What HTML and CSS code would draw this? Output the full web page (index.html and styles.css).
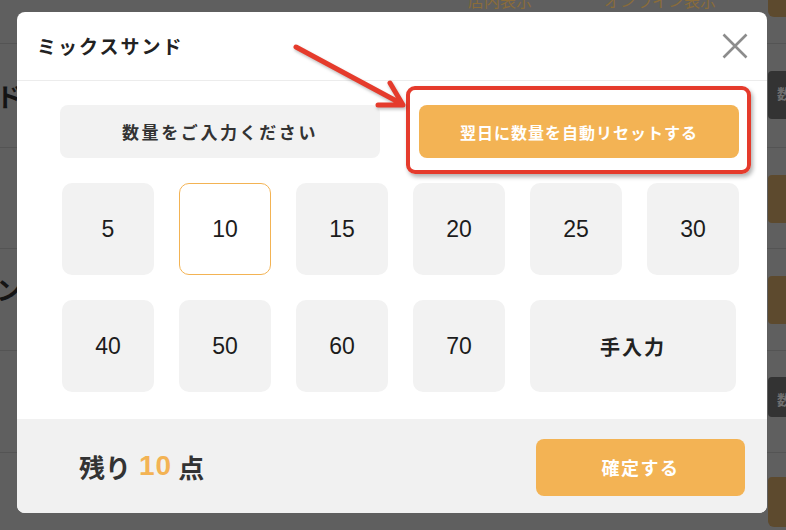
FILE: index.html
```html
<!DOCTYPE html>
<html lang="ja">
<head>
<meta charset="utf-8">
<title>ミックスサンド</title>
<link rel="stylesheet" href="styles.css">
</head>
<body>
<div class="page">
  <div class="row row0">
    <div class="row-left"></div>
    <div class="row-mid tabs"><span class="tab">店内表示</span><span class="tab">オンライン表示</span></div>
    <div class="row-right"><div class="blk brown blk-top"></div></div>
  </div>
  <div class="row row1">
    <div class="row-left"><span class="bg-text">サンド</span></div>
    <div class="row-mid"></div>
    <div class="row-right"><div class="blk dark">数</div></div>
  </div>
  <div class="row row2">
    <div class="row-left"></div>
    <div class="row-mid"></div>
    <div class="row-right"><div class="blk brown"></div></div>
  </div>
  <div class="row row3">
    <div class="row-left"><span class="bg-text up">サン</span></div>
    <div class="row-mid"></div>
    <div class="row-right"><div class="blk brown"></div></div>
  </div>
  <div class="row row4">
    <div class="row-left"></div>
    <div class="row-mid"></div>
    <div class="row-right"><div class="blk dark short">数</div></div>
  </div>
  <div class="row row5">
    <div class="row-left"></div>
    <div class="row-mid"></div>
    <div class="row-right"><div class="blk brown blk-last"></div></div>
  </div>
</div>

<div class="modal">
  <div class="modal-header">
    <h1 class="modal-title">ミックスサンド</h1>
    <button class="close" aria-label="閉じる">
      <svg width="26" height="26" viewBox="0 0 26 26"><path d="M1.5 1.5 L24.5 24.5 M24.5 1.5 L1.5 24.5" stroke="#8c8c8c" stroke-width="2.6" stroke-linecap="butt" fill="none"/></svg>
    </button>
  </div>
  <div class="modal-body">
    <div class="top-row">
      <div class="btn-label">数量をご入力ください</div>
      <button class="btn-reset">翌日に数量を自動リセットする</button>
    </div>
    <div class="qty-grid">
      <button class="qty">5</button>
      <button class="qty selected">10</button>
      <button class="qty">15</button>
      <button class="qty">20</button>
      <button class="qty">25</button>
      <button class="qty">30</button>
      <button class="qty">40</button>
      <button class="qty">50</button>
      <button class="qty">60</button>
      <button class="qty">70</button>
      <button class="qty manual">手入力</button>
    </div>
  </div>
  <div class="modal-footer">
    <div class="remain">残り<span class="num">10</span>点</div>
    <button class="btn-confirm">確定する</button>
  </div>
</div>

<div class="highlight"></div>
<svg class="arrow" width="786" height="530" viewBox="0 0 786 530">
  <path d="M296 47 L402 104 M378 105 L403 105 L390 83" stroke="#e53b2c" stroke-width="5" stroke-linecap="round" stroke-linejoin="round" fill="none"/>
</svg>
</body>
</html>
```

FILE: styles.css
```css
* { box-sizing: border-box; }
html, body { margin: 0; padding: 0; }
body {
  width: 786px;
  height: 530px;
  overflow: hidden;
  position: relative;
  background: #5f5f5f;
  font-family: "Liberation Sans", "Noto Sans CJK JP", sans-serif;
}

/* background page (dimmed) */
.page {
  display: flex;
  flex-direction: column;
  width: 786px;
  height: 530px;
}
.row {
  display: flex;
  border-bottom: 1px solid #545454;
  flex: none;
}
.row0 { height: 44px; }
.row1 { height: 104px; }
.row2 { height: 101px; }
.row3 { height: 102px; }
.row4 { height: 102px; }
.row5 { height: 90px; border-bottom: none; }
.row-left {
  width: 22px;
  display: flex;
  justify-content: flex-end;
  align-items: center;
  overflow: visible;
  white-space: nowrap;
}
.row-mid { flex: 1; }
.row-right { width: 18px; position: relative; }
.bg-text {
  font-family: "Noto Sans CJK JP", sans-serif;
  font-weight: 700;
  font-size: 26px;
  color: #141414;
}
.bg-text.up { margin-top: -22px; }
.blk {
  margin-top: 27px;
  height: 48px;
  width: 30px;
  border-radius: 4px 0 0 4px;
  color: #6f6f6f;
  font-family: "Noto Sans CJK JP", sans-serif;
  font-weight: 700;
  font-size: 14px;
  padding: 12px 0 0 9px;
}
.brown { background: #5d4a2e; }
.dark { background: #333333; }
.blk.short { height: 40px; margin-top: 26px; }
.blk-top { margin-top: 0; height: 17px; border-radius: 0 0 0 6px; }
.blk-last { margin-top: 24px; height: 50px; border-radius: 4px 0 0 6px; }
.tabs {
  display: flex;
  overflow: hidden;
}
.tab {
  font-family: "Noto Sans CJK JP", sans-serif;
  font-size: 16px;
  line-height: 16px;
  color: #8a6c3a;
  margin-top: -8px;
  white-space: nowrap;
}
.tab:first-child { margin-left: 446px; }
.tab + .tab { margin-left: 72px; }

/* modal */
.modal {
  position: absolute;
  left: 17px;
  top: 12px;
  width: 750px;
  height: 501px;
  background: #fff;
  border-radius: 8px;
  display: flex;
  flex-direction: column;
  overflow: hidden;
}
.modal-header {
  height: 69px;
  flex: none;
  border-bottom: 1px solid #ececec;
  display: flex;
  align-items: center;
  justify-content: space-between;
  padding: 0 19px 0 20px;
}
.modal-title {
  margin: 0;
  font-family: "Noto Sans CJK JP", sans-serif;
  font-size: 19px;
  font-weight: 700;
  letter-spacing: 2px;
  color: #222;
  margin-top: -1px;
}
.close {
  border: none;
  background: none;
  padding: 0;
  width: 26px;
  height: 26px;
  display: block;
}
.close svg { display: block; }

.modal-body {
  flex: none;
  height: 338px;
  padding: 24px 28px 0 43px;
}
.top-row {
  display: flex;
  gap: 39px;
}
button {
  font-family: inherit;
  cursor: pointer;
}
.btn-label, .btn-reset {
  width: 320px;
  height: 53px;
  border-radius: 8px;
  display: flex;
  align-items: center;
  justify-content: center;
  font-family: "Noto Sans CJK JP", sans-serif;
  font-weight: 700;
  font-size: 16px;
  border: none;
}
.btn-label {
  background: #f2f2f2;
  color: #333;
  font-size: 17px;
  letter-spacing: 2.6px;
}
.btn-reset {
  background: #f3b354;
  color: #fff;
  letter-spacing: 1px;
}
.qty-grid {
  margin: 25px 0 0 2px;
  display: grid;
  grid-template-columns: repeat(6, 92px);
  grid-auto-rows: 92px;
  gap: 25px;
}
.qty {
  border: 1px solid transparent;
  background: #f2f2f2;
  border-radius: 10px;
  font-family: "Liberation Sans", "Noto Sans CJK JP", sans-serif;
  font-size: 23px;
  color: #1c1c1c;
  padding: 0;
}
.qty.selected {
  background: #fff;
  border-color: #f3b354;
}
.qty.manual {
  grid-column: span 2;
  width: 206px;
  font-family: "Noto Sans CJK JP", sans-serif;
  font-weight: 700;
  font-size: 20px;
  letter-spacing: 2px;
  color: #222;
}

.modal-footer {
  flex: 1;
  background: #f1f1f1;
  display: flex;
  align-items: center;
  justify-content: space-between;
  padding: 0 22px 0 62px;
}
.remain {
  font-family: "Noto Sans CJK JP", sans-serif;
  font-weight: 700;
  font-size: 26px;
  color: #333;
  display: flex;
  align-items: center;
}
.remain .num {
  color: #f3b354;
  margin: 0 6px 0 8px;
  font-family: "Liberation Sans", sans-serif;
  font-size: 28px;
  letter-spacing: 1px;
}
.btn-confirm {
  width: 209px;
  height: 57px;
  margin-top: 2px;
  border: none;
  border-radius: 8px;
  background: #f3b354;
  color: #fff;
  font-family: "Noto Sans CJK JP", sans-serif;
  font-weight: 700;
  font-size: 18px;
  letter-spacing: 1.5px;
}

/* annotations */
.highlight {
  position: absolute;
  left: 406px;
  top: 86px;
  width: 345px;
  height: 88px;
  border: 4px solid #e53b2c;
  border-radius: 9px;
  box-shadow: 2px 3px 4px rgba(0,0,0,0.3);
  pointer-events: none;
}
.arrow {
  position: absolute;
  left: 0;
  top: 0;
  pointer-events: none;
  filter: drop-shadow(1px 2px 1.5px rgba(0,0,0,0.25));
}
```
